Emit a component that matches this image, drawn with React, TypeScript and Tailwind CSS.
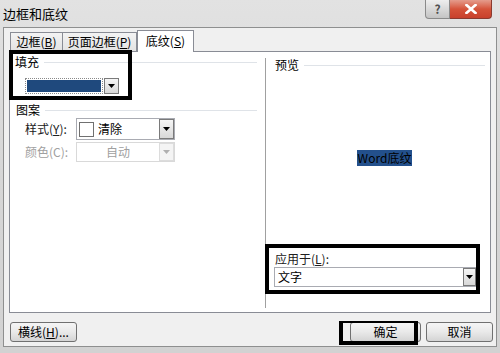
const ui = "font-['Noto_Sans_CJK_SC',sans-serif]";

function Arrow({ disabled = false, className = "" }: { disabled?: boolean; className?: string }) {
  return (
    <div
      className={`flex shrink-0 items-center justify-center border ${
        disabled
          ? "border-[#dcdcdc] bg-[#f4f4f4]"
          : "border-[#7a7a7a] bg-gradient-to-b from-[#f6f6f6] to-[#d8d8d8]"
      } ${className}`}
    >
      <svg width="7" height="4" viewBox="0 0 7 4">
        <path d="M0 0h7L3.5 4z" fill={disabled ? "#b0b0b0" : "#000"} />
      </svg>
    </div>
  );
}

function GroupHeader({ label, className = "" }: { label: string; className?: string }) {
  return (
    <div className={`flex items-center ${className}`}>
      <span className="leading-[14px]">{label}</span>
      <div className="ml-[5px] h-px flex-1 bg-[#dfe3e8]" />
    </div>
  );
}

function Button({ children, className = "" }: { children: React.ReactNode; className?: string }) {
  return (
    <div
      className={`flex h-[20px] items-center justify-center rounded-[3px] border border-[#707070] bg-gradient-to-b from-[#f5f5f5] via-[#e9e9e9] to-[#d4d4d4] leading-[14px] ${className}`}
    >
      {children}
    </div>
  );
}

export default function App() {
  return (
    <div className={`relative h-[353px] w-[500px] overflow-hidden bg-gradient-to-b from-[#e2e2e2] via-[#d6d6d6] to-[#d2d2d2] text-[12px] text-black ${ui}`}>
      {/* title bar */}
      <div className="flex h-[27px] items-start">
        <div className="pl-[3px] pt-[7px] text-[13px] leading-[14px]">边框和底纹</div>
        <div className="ml-auto mr-[8px] flex h-[19px]">
          <div className="flex w-[25px] items-center justify-center rounded-bl-[4px] border border-t-0 border-[#8a8a8a] bg-gradient-to-b from-[#eeeeee] to-[#c4c4c4] text-[12px] font-bold leading-none text-[#505050]">
            ?
          </div>
          <div className="flex w-[42px] items-center justify-center rounded-br-[4px] border border-l-0 border-t-0 border-[#8a3a30] bg-gradient-to-b from-[#e49b8c] via-[#d5533a] to-[#c8402c]">
            <svg width="12" height="10" viewBox="0 0 12 10">
              <path d="M1.5 1l9 8M10.5 1l-9 8" stroke="#fff" strokeWidth="2.6" strokeLinecap="square" />
            </svg>
          </div>
        </div>
      </div>

      {/* dialog body */}
      <div className="mx-[3px] flex h-[320px] flex-col border border-[#8e8f8f] bg-[#f0f0f0] px-[5px]">
        {/* tabs */}
        <div className="flex h-[23px] items-end pl-[1px] pt-[3px]">
          <div className="flex h-[19px] w-[53px] items-center justify-center border border-b-0 border-[#898c95] bg-gradient-to-b from-[#f3f3f3] to-[#e3e3e3] leading-[14px]">
            边框(<span className="underline">B</span>)
          </div>
          <div className="flex h-[19px] w-[74px] items-center justify-center border border-b-0 border-l-0 border-[#898c95] bg-gradient-to-b from-[#f3f3f3] to-[#e3e3e3] leading-[14px]">
            页面边框(<span className="underline">P</span>)
          </div>
          <div className="relative z-10 -mb-px flex h-[22px] w-[57px] items-start justify-center border border-b-0 border-[#898c95] bg-white pt-[3px] leading-[14px]">
            底纹(<span className="underline">S</span>)
          </div>
        </div>

        {/* panel */}
        <div className="flex h-[262px] border border-[#898c95] bg-white">
          {/* left column */}
          <div className="flex w-[247px] flex-col">
            <GroupHeader label="填充" className="mt-[3px] pl-[5px]" />
            <div className="ml-[15px] mt-[9px] flex h-[16px] w-[94px] items-stretch bg-white">
              <div className="flex flex-1 items-center border border-dotted border-[#8a8a8a] p-[1px]">
                <div className="h-full w-full bg-[#1f497d]" />
              </div>
              <Arrow className="ml-[1px] w-[15px]" />
            </div>

            <GroupHeader label="图案" className="mt-[9px] pl-[6px]" />
            <div className="mt-[1px] flex items-center pl-[15px]">
              <span className="w-[51px] leading-[14px] text-[#202020]">
                样式(<span className="underline">Y</span>):
              </span>
              <div className="flex h-[22px] w-[99px] items-stretch border border-[#a9abb2] bg-white">
                <div className="flex flex-1 items-center pl-[2px]">
                  <div className="h-[15px] w-[15px] border border-[#707070]" />
                  <span className="ml-[4px] leading-[14px]">清除</span>
                </div>
                <Arrow className="w-[15px]" />
              </div>
            </div>
            <div className="mt-[2px] flex items-center pl-[15px] text-[#a0a0a0]">
              <span className="w-[51px] leading-[14px]">颜色(C):</span>
              <div className="flex h-[20px] w-[99px] items-stretch border border-[#d9d9d9] bg-white">
                <div className="flex flex-1 items-center justify-center leading-[14px]">自动</div>
                <Arrow disabled className="w-[15px]" />
              </div>
            </div>
          </div>

          {/* right column */}
          <div className="ml-[8px] mt-[6px] flex h-[250px] flex-1 flex-col border-l border-[#a0a0a0] pr-[5px]">
            <GroupHeader label="预览" className="pl-[9px]" />
            <div className="flex h-[171px] items-start justify-center pl-[18px] pt-[78px]">
              <span className="bg-[#23508c] px-[1px] leading-[16px]">Word底纹</span>
            </div>
            <div className="mt-[9px] pl-[9px] leading-[14px] text-[#202020]">
              应用于(<span className="underline">L</span>):
            </div>
            <div className="ml-[8px] mt-[1px] flex h-[20px] w-[203px] items-stretch border border-[#a9abb2] bg-white">
              <div className="flex flex-1 items-center pl-[3px] leading-[14px]">文字</div>
              <Arrow className="w-[13px]" />
            </div>
          </div>
        </div>

        {/* buttons */}
        <div className="mt-[9px] flex pl-[1px]">
          <Button className="w-[67px]">
            横线(<span className="underline">H</span>)...
          </Button>
          <Button className="ml-auto w-[71px]">确定</Button>
          <Button className="ml-[5px] mr-[-2px] w-[67px]">取消</Button>
        </div>
      </div>

      {/* annotation boxes */}
      <div className="pointer-events-none absolute left-[9px] top-[50px] h-[50px] w-[123px] border-4 border-black" />
      <div className="pointer-events-none absolute left-[265px] top-[244px] h-[50px] w-[215px] border-4 border-black" />
      <div className="pointer-events-none absolute left-[339px] top-[321px] h-[24px] w-[79px] border-4 border-t-2 border-black" />
    </div>
  );
}
